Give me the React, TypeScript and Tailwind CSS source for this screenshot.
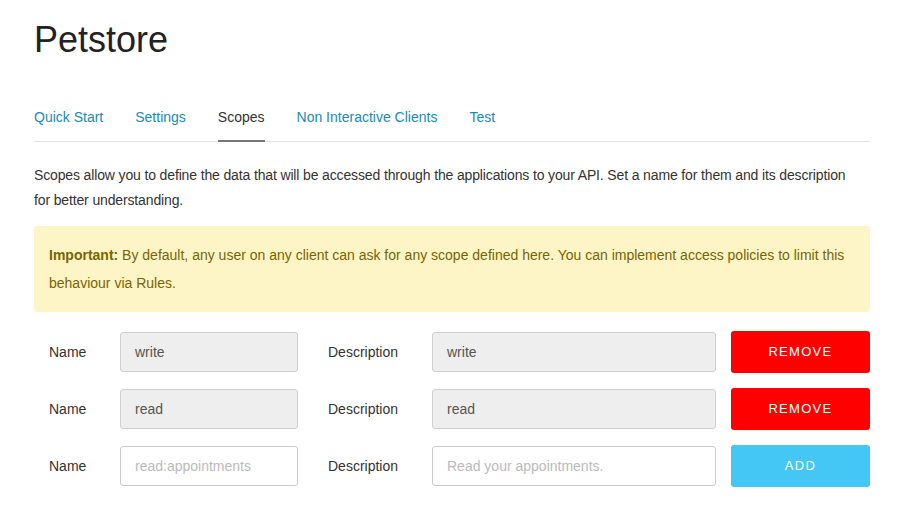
const tabs = ["Quick Start", "Settings", "Scopes", "Non Interactive Clients", "Test"];

const scopes = [
  { name: "write", description: "write" },
  { name: "read", description: "read" },
];

function Row({
  name,
  description,
  isNew,
}: {
  name: string;
  description: string;
  isNew?: boolean;
}) {
  const inputClass = isNew
    ? "h-[40px] rounded-[3px] border border-[#cccccc] bg-white px-[14px] text-[14px] text-[#bbbbbb] flex items-center"
    : "h-[40px] rounded-[3px] border border-[#d0d0d0] bg-[#eeeeee] px-[14px] text-[14px] text-[#555555] flex items-center";
  return (
    <div className="flex items-center h-[42px]">
      <div className="w-[86px] pl-[15px] text-[14px] text-[#333333]">Name</div>
      <div className={`${inputClass} w-[178px]`}>{name}</div>
      <div className="w-[134px] pl-[30px] text-[14px] text-[#333333]">Description</div>
      <div className={`${inputClass} w-[284px]`}>{description}</div>
      <button
        className={`ml-[15px] h-[42px] w-[139px] rounded-[3px] text-[13px] tracking-[0.1em] text-white ${
          isNew ? "bg-[#44c7f4]" : "bg-[#ff0000]"
        }`}
      >
        {isNew ? "ADD" : "REMOVE"}
      </button>
    </div>
  );
}

export default function App() {
  return (
    <div className="min-h-[524px] bg-white pl-[34px] pt-[18px] font-['Liberation_Sans',Arial,sans-serif]">
      <div className="w-[836px]">
        <h1 className="text-[36px] leading-[44px] text-[#222222]">Petstore</h1>

        <nav className="mt-[46px] flex border-b border-[#e2e2e2]">
          {tabs.map((t) => (
            <div
              key={t}
              className={`mr-[32px] pb-[14px] text-[14px] leading-[18px] ${
                t === "Scopes"
                  ? "border-b-2 border-[#777777] text-[#333333] -mb-[1px]"
                  : "text-[#1a8ab8]"
              }`}
            >
              {t}
            </div>
          ))}
        </nav>

        <p className="mt-[21px] w-[822px] text-[14px] leading-[25px] tracking-[-0.01em] text-[#333333]">
          Scopes allow you to define the data that will be accessed through the applications to your API. Set a
          name for them and its description for better understanding.
        </p>

        <div className="mt-[13px] rounded-[3px] bg-[#fef5c7] px-[15px] py-[15px] text-[14px] leading-[28px] text-[#7a6400]">
          <p>
            <strong>Important:</strong> By default, any user on any client can ask for any scope defined here. You
            can implement access policies to limit this behaviour via Rules.
          </p>
        </div>

        <div className="mt-[19px] flex flex-col gap-[15px]">
          {scopes.map((s) => (
            <Row key={s.name} name={s.name} description={s.description} />
          ))}
          <Row name="read:appointments" description="Read your appointments." isNew />
        </div>
      </div>
    </div>
  );
}
